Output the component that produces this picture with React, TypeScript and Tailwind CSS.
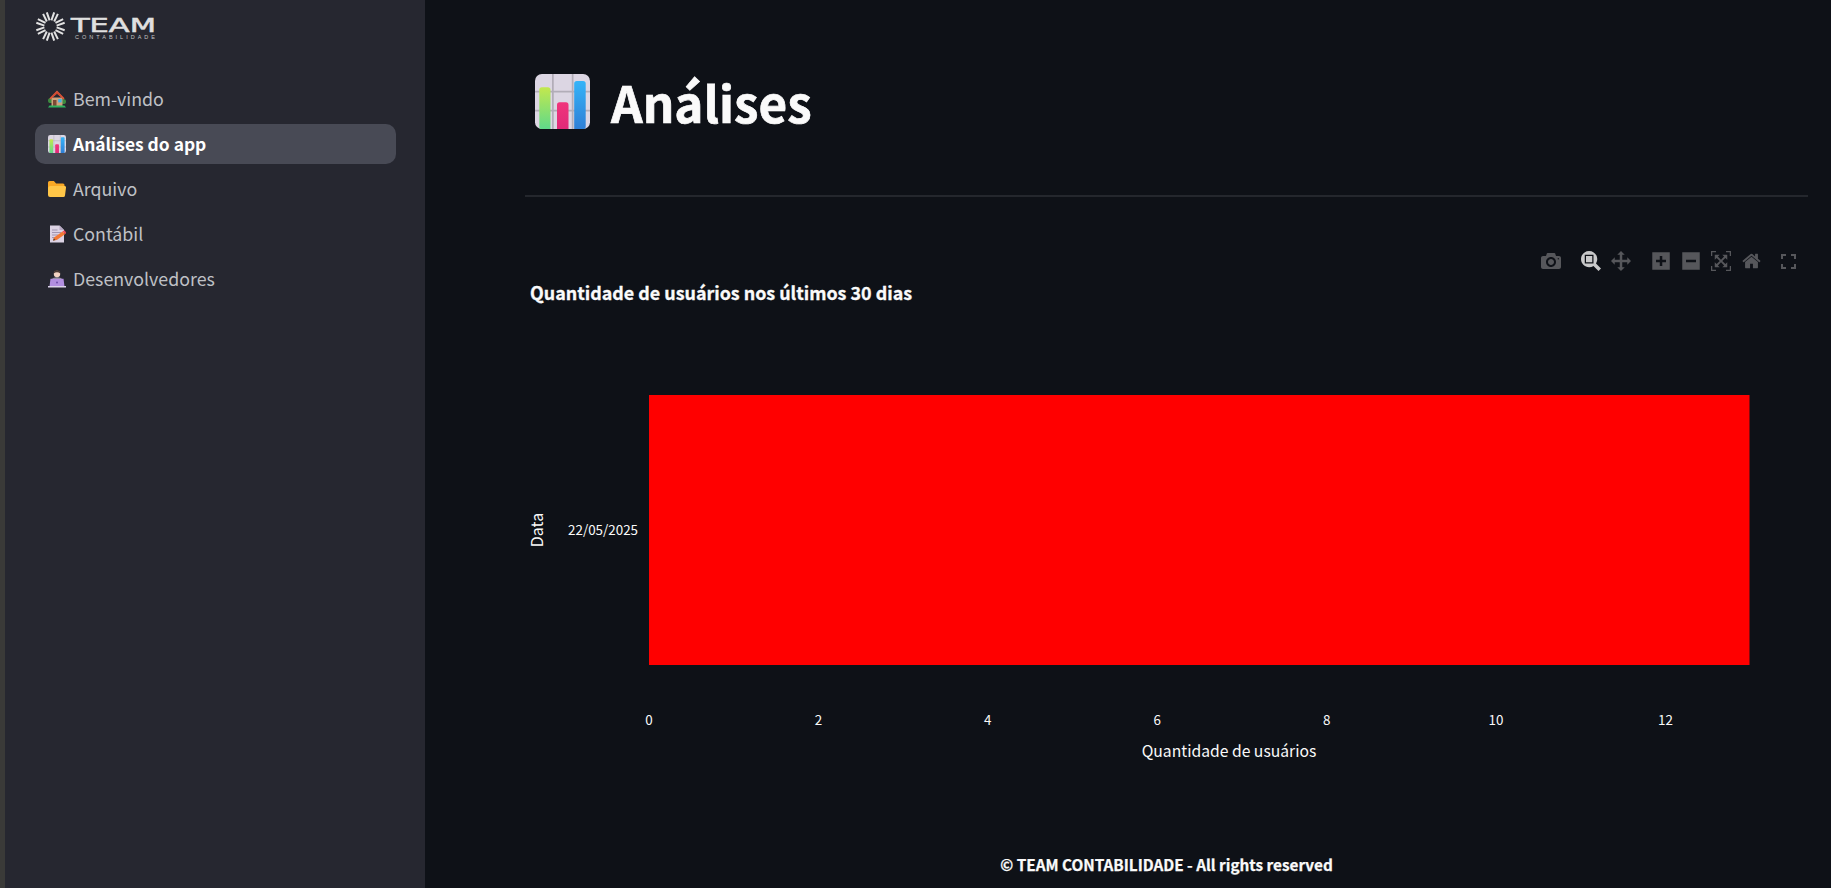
import { useId } from "react";

const SOURCE = "font-['Noto_Sans_CJK_SC','Noto_Sans',sans-serif]";

function ChartEmoji({ className }: { className: string }) {
  const id = useId();
  return (
    <svg viewBox="0 0 32 32" className={className}>
      <defs>
        <linearGradient id={`${id}g`} x1="0" y1="0" x2="0" y2="1">
          <stop offset="0" stopColor="#c3e84e" />
          <stop offset="1" stopColor="#5fd98a" />
        </linearGradient>
        <linearGradient id={`${id}p`} x1="0" y1="0" x2="0" y2="1">
          <stop offset="0" stopColor="#f0357c" />
          <stop offset="1" stopColor="#e02a78" />
        </linearGradient>
        <linearGradient id={`${id}b`} x1="0" y1="0" x2="0" y2="1">
          <stop offset="0" stopColor="#35b4f8" />
          <stop offset="1" stopColor="#2f7fd6" />
        </linearGradient>
      </defs>
      <rect width="32" height="32" rx="4" fill="#dcd6e3" />
      <path d="M10.4 0V32M21.9 0V32M0 10.2H32M0 21.3H32" stroke="#b2adb8" strokeWidth="1" />
      <path d="M2.5 9.2a1.5 1.5 0 0 1 1.5-1.5h3.5a1.5 1.5 0 0 1 1.5 1.5V32H4a1.5 1.5 0 0 1-1.5-1.5z" fill={`url(#${id}g)`} />
      <path d="M12.8 18a1.5 1.5 0 0 1 1.5-1.5h3.7a1.5 1.5 0 0 1 1.5 1.5V32h-6.7z" fill={`url(#${id}p)`} />
      <path d="M22.8 5.5A1.5 1.5 0 0 1 24.3 4h3.7a1.5 1.5 0 0 1 1.5 1.5V30.500a1.5 1.5 0 0 1-1.500 1.500h-5.200z" fill={`url(#${id}b)`} />
    </svg>
  );
}

function HouseEmoji() {
  return (
    <svg viewBox="0 0 18 18" className="w-[18px] h-[18px]">
      <circle cx="2.600" cy="10.500" r="2.600" fill="#3d8a3f" />
      <circle cx="15.400" cy="11.500" r="2.600" fill="#3d8a3f" />
      <path d="M3.500 7.500h11V16h-11z" fill="#cda37c" />
      <path d="M1.500 8.200L9 .500l7.500 7.700-1 1.300L9 3.800 2.500 9.500z" fill="#e2583a" />
      <path d="M3.500 7L9 2l5.500 5L9 3.800z" fill="#c9452f" />
      <path d="M5 10h3.500v6H5z" fill="#7a4a34" />
      <path d="M10.200 9h3.400v3.400h-3.400z" fill="#3fb4ea" />
      <path d="M0 17.500l1.500-2h15l1.500 2z" fill="#2fb35f" />
    </svg>
  );
}

function FolderEmoji() {
  return (
    <svg viewBox="0 0 18 18" className="w-[18px] h-[18px]">
      <path d="M0 2.500A1.500 1.500 0 0 1 1.500 1h4.400l2.200 2.500h6.900A1.500 1.500 0 0 1 16.500 5v4H0z" fill="#f9a825" />
      <path d="M0 8.500A2.500 2.500 0 0 1 2.500 6h14A1.500 1.500 0 0 1 18 7.700l-1 7.800A1.700 1.700 0 0 1 15.300 17H2a2 2 0 0 1-2-2z" fill="#ffc648" />
    </svg>
  );
}

function MemoEmoji() {
  return (
    <svg viewBox="0 0 18 18" className="w-[18px] h-[18px]">
      <path d="M2 .500h9.500L16 5v12.500H2z" fill="#dcd3e4" />
      <path d="M11.500 .500L16 5h-4.500z" fill="#b7aac4" />
      <path d="M4 5h5.500M4 7.500h9M4 10h6M4 12.500h3.500" stroke="#9a8daa" strokeWidth=".9" />
      <path d="M5 15.500l1-3L14.500 6.500l2.800 2.500-8.500 6z" fill="#f47a35" />
      <path d="M14.500 6.500l1.800-1.200 2.200 2.500-1.200 1.200z" fill="#ef4a5a" />
      <path d="M5 15.800l.8-2.600 1.800 1.700z" fill="#5b4636" />
    </svg>
  );
}

function DevEmoji() {
  return (
    <svg viewBox="0 0 18 18" className="w-[18px] h-[18px]">
      <path d="M3.500 11c0-3 2.500-3.800 5.500-3.800s5.500 .8 5.500 3.800z" fill="#8d8a95" />
      <circle cx="9" cy="4" r="3.200" fill="#f3d3c3" />
      <path d="M5.700 3.500a3.300 3.300 0 0 1 6.600 0c-1-.8-2-1.200-3.300-1.200s-2.300 .4-3.300 1.200z" fill="#4a3a34" />
      <path d="M2.500 8.800h13l1 7.700h-15z" fill="#b28fe0" />
      <path d="M0 16h18v1.500H0z" fill="#dcd3ea" />
      <circle cx="9" cy="12.500" r="1" fill="#6e4fa8" />
    </svg>
  );
}

function Logo() {
  const spokes = [0, 45, 90, 135, 180, 225, 270, 315];
  return (
    <svg viewBox="0 0 130 32" className="w-[130px] h-[32px] block">
      <g transform="translate(15.500 15.500)" stroke="#e2e2e2" strokeWidth="2">
        {spokes.map((a) => (
          <g key={a} transform={`rotate(${a + 22.5})`}>
            <path d="M-1.500 -6L-2 -14.500M1.500 -6L2 -14.500" />
          </g>
        ))}
      </g>
      <text
        x="36"
        y="21"
        fontSize="19"
        fill="#e0e0e0"
        stroke="#e0e0e0"
        strokeWidth=".5"
        fontFamily="'DejaVu Sans',sans-serif"
        textLength="85"
        lengthAdjust="spacingAndGlyphs"
      >
        TEAM
      </text>
      <text
        x="40"
        y="27.500"
        fontSize="5.500"
        fill="#c4c4c4"
        fontFamily="'Liberation Sans',sans-serif"
        textLength="80"
      >
        CONTABILIDADE
      </text>
    </svg>
  );
}

function ModeIcon({ d, w = 1000, active = false, className }: { d: string; w?: number; active?: boolean; className: string }) {
  return (
    <svg viewBox={`0 0 ${w} 1000`} className={className} fill={active ? "#c9c9ca" : "#56575b"}>
      <path transform="matrix(1 0 0 -1 0 850)" d={d} />
    </svg>
  );
}

function ModeBar() {
  return (
    <div className="absolute right-[12px] top-[11px] flex items-center h-[20px]">
      <ModeIcon
        className="w-[20px] h-[20px]"
        d="m500 450c-83 0-150-67-150-150 0-83 67-150 150-150 83 0 150 67 150 150 0 83-67 150-150 150z m400 150h-120c-16 0-34 13-39 29l-31 93c-6 15-23 28-40 28h-340c-16 0-34-13-39-28l-31-94c-6-15-23-28-40-28h-120c-55 0-100-45-100-100v-450c0-55 45-100 100-100h800c55 0 100 45 100 100v450c0 55-45 100-100 100z m-400-550c-138 0-250 112-250 250 0 138 112 250 250 250 138 0 250-112 250-250 0-138-112-250-250-250z m365 380c-19 0-35 16-35 35 0 19 16 35 35 35 19 0 35-16 35-35 0-19-16-35-35-35z"
      />
      <ModeIcon
        active
        className="w-[20px] h-[20px] ml-[20px]"
        d="m1000-25l-250 251c40 63 63 138 63 218 0 224-182 406-407 406-224 0-406-182-406-406s183-406 407-406c80 0 155 22 218 62l250-250 125 125z m-812 250l0 438 437 0 0-438-437 0z m62 375l313 0 0-312-313 0 0 312z"
      />
      <ModeIcon
        className="w-[20px] h-[20px] ml-[10px]"
        d="m1000 350l-187 188 0-125-250 0 0 250 125 0-188 187-187-187 125 0 0-250-250 0 0 125-188-188 186-187 0 125 252 0 0-250-125 0 187-188 188 188-125 0 0 250 250 0 0-125 187 188z"
      />
      <ModeIcon
        w={875}
        className="w-[18px] h-[20px] ml-[21px]"
        d="m1 787l0-875 875 0 0 875-875 0z m687-500l-187 0 0-187-125 0 0 187-188 0 0 125 188 0 0 187 125 0 0-187 187 0 0-125z"
      />
      <ModeIcon
        w={875}
        className="w-[18px] h-[20px] ml-[12px]"
        d="m0 788l0-876 875 0 0 876-875 0z m688-500l-500 0 0 125 500 0 0-125z"
      />
      <ModeIcon
        className="w-[20px] h-[20px] ml-[11px]"
        d="m250 850l-187 0-63 0 0-62 0-188 63 0 0 188 187 0 0 62z m688 0l-188 0 0-62 188 0 0-188 62 0 0 188 0 62-62 0z m-875-938l0 188-63 0 0-188 0-62 63 0 187 0 0 62-187 0z m875 188l0-188-188 0 0-62 188 0 62 0 0 62 0 188-62 0z m-125 188l-1 0-93-94-156 156 156 156 92-93 2 0 0 250-250 0 0-2 93-92-156-156-156 156 94 92 0 2-250 0 0-250 0 0 93 93 157-156-157-156-93 94 0 0 0-250 250 0 0 0-94 93 156 157 156-157-93-93 0 0 250 0 0 250z"
      />
      <ModeIcon
        w={929}
        className="w-[19px] h-[20px] ml-[11px]"
        d="m786 296v-267q0-15-11-26t-25-10h-214v214h-143v-214h-214q-15 0-25 10t-11 26v267q0 1 0 2t0 2l321 264 321-264q1-1 1-4z m124 39l-34-41q-5-5-12-6h-2q-7 0-12 3l-386 322-386-322q-7-4-13-4-7 2-12 7l-35 41q-4 5-3 13t6 12l401 334q18 15 42 15t43-15l136-114v109q0 8 5 13t13 5h107q8 0 13-5t5-13v-227l122-102q5-5 6-12t-4-13z"
      />
      <svg viewBox="0 0 15 15" className="w-[15px] h-[15px] ml-[20px]" fill="none" stroke="#56575b" strokeWidth="2">
        <path d="M1 5V1H5M10 1H14V5M14 10V14H10M5 14H1V10" />
      </svg>
    </div>
  );
}

const TICKS = [0, 2, 4, 6, 8, 10, 12];

function Chart() {
  return (
    <div className="relative mt-[43px] h-[590px]">
      <ModeBar />
      <svg viewBox="0 0 1283 590" className={`w-[1283px] h-[590px] block overflow-visible ${SOURCE}`}>
        <text x="5" y="60" fontSize="17.900" fontWeight="700" fill="#fafafa" stroke="#fafafa" strokeWidth=".3">
          Quantidade de usuários nos últimos 30 dias
        </text>
        <rect x="124" y="155" width="1100.500" height="270" fill="#ff0000" />
        <text
          transform="translate(18 290) rotate(-90)"
          textAnchor="middle"
          fontSize="16"
          fill="#fafafa"
        >
          Data
        </text>
        <text x="113" y="295" textAnchor="end" fontSize="13.400" fill="#fafafa">
          22/05/2025
        </text>
        {TICKS.map((t) => (
          <text key={t} x={124 + t * 84.7} y="485" textAnchor="middle" fontSize="13.400" fill="#fafafa">
            {t}
          </text>
        ))}
        <text x="704" y="517" textAnchor="middle" fontSize="15.700" fill="#fafafa">
          Quantidade de usuários
        </text>
      </svg>
    </div>
  );
}

const NAV = [
  { label: "Bem-vindo", icon: <HouseEmoji /> },
  { label: "Análises do app", icon: <ChartEmoji className="w-[18px] h-[18px]" />, active: true },
  { label: "Arquivo", icon: <FolderEmoji /> },
  { label: "Contábil", icon: <MemoEmoji /> },
  { label: "Desenvolvedores", icon: <DevEmoji /> },
];

export default function App() {
  return (
    <div className={`flex h-[888px] w-[1831px] overflow-hidden bg-[#0e1117] ${SOURCE}`}>
      <div className="w-[5px] shrink-0 bg-[#3a3a38]" />
      <aside className="w-[420px] shrink-0 bg-[#262730] pl-[30px] pr-[29px]">
        <div className="pt-[11px]">
          <Logo />
        </div>
        <nav className="mt-[36px] flex flex-col gap-[5px]">
          {NAV.map((item) => (
            <div
              key={item.label}
              className={`flex h-[40px] items-center gap-[7px] rounded-[10px] px-[13px] ${
                item.active ? "bg-[#484a55] text-[17.4px] font-bold text-white" : "text-[17.8px] text-[#bfc0c5]"
              }`}
            >
              {item.icon}
              <span className={item.active ? "" : "pb-[2px]"}>{item.label}</span>
            </div>
          ))}
        </nav>
      </aside>
      <main className="flex flex-1 flex-col pl-[100px] pr-[23px]">
        <div className="flex items-center pl-[10px] pt-[74px]">
          <ChartEmoji className="h-[55px] w-[55px]" />
          <h1 className="ml-[21px] text-[49.4px] font-bold leading-[55px] text-[#fafafa] [-webkit-text-stroke:0.7px_#fafafa]">
            Análises
          </h1>
        </div>
        <hr className="mt-[66px] border-t-2 border-[#24272d]" />
        <Chart />
        <div className="pt-[23px] text-center text-[15.3px] font-bold text-[#fafafa] [-webkit-text-stroke:0.25px_#fafafa]">
          © TEAM CONTABILIDADE - All rights reserved
        </div>
      </main>
    </div>
  );
}
